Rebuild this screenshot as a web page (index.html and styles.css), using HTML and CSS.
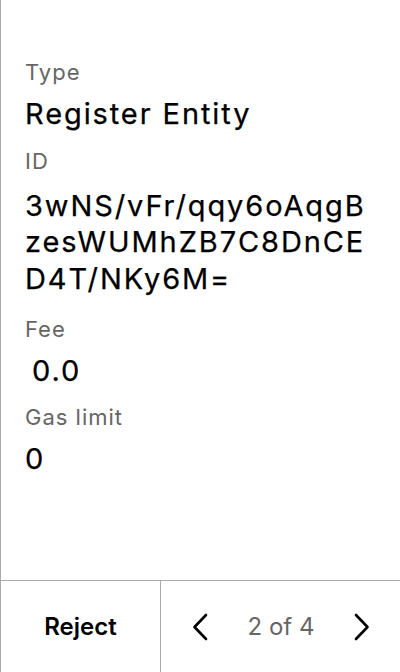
FILE: index.html
```html
<!DOCTYPE html>
<html>
<head>
<meta charset="utf-8">
<link rel="stylesheet" href="styles.css">
</head>
<body>
<div class="screen">
  <div class="content">
    <div class="label">Type</div>
    <div class="value">Register Entity</div>
    <div class="label">ID</div>
    <div class="value multi">3wNS/vFr/qqy6oAqgBzesWUMhZB7C8DnCED4T/NKy6M=</div>
    <div class="label">Fee</div>
    <div class="value pre"> 0.0</div>
    <div class="label">Gas limit</div>
    <div class="value">0</div>
  </div>
  <div class="bar">
    <div class="reject">Reject</div>
    <div class="pager">
      <svg class="chev" width="16" height="28" viewBox="0 0 16 28"><path d="M14 2 L2.5 14 L14 26" fill="none" stroke="#000" stroke-width="2.6" stroke-linecap="round" stroke-linejoin="round"/></svg>
      <span class="count">2 of 4</span>
      <svg class="chev" width="16" height="28" viewBox="0 0 16 28"><path d="M2 2 L13.5 14 L2 26" fill="none" stroke="#000" stroke-width="2.6" stroke-linecap="round" stroke-linejoin="round"/></svg>
    </div>
  </div>
</div>
</body>
</html>
```
FILE: styles.css
```css
html, body {
  margin: 0;
  padding: 0;
  background: #fff;
}
body {
  font-family: Inter, "Noto Sans", sans-serif;
  color: #000;
}
.screen {
  width: 400px;
  height: 672px;
  box-sizing: border-box;
  border-left: 1px solid #aaa;
  display: flex;
  flex-direction: column;
}
.content {
  flex: 1;
  padding: 58px 24px 0 24px;
  display: flex;
  flex-direction: column;
}
.label {
  font-size: 22px;
  line-height: 28px;
  letter-spacing: 1px;
  color: #666;
  margin-bottom: 13px;
}
.value {
  font-size: 29px;
  line-height: 30px;
  letter-spacing: 1.9px;
  color: #000;
  margin-bottom: 17.5px;
  -webkit-text-stroke: 0.25px #000;
}
.multi {
  line-height: 36.5px;
  word-break: break-all;
}
.pre {
  white-space: pre;
  word-spacing: -3px;
}
.bar {
  height: 92px;
  border-top: 1px solid #aaa;
  display: flex;
  box-sizing: border-box;
}
.reject {
  width: 159px;
  border-right: 1px solid #aaa;
  display: flex;
  align-items: center;
  justify-content: center;
  font-size: 24px;
  font-weight: 600;
}
.pager {
  flex: 1;
  display: flex;
  align-items: center;
  justify-content: space-between;
  padding: 0 30px 0 31px;
}
.count {
  font-size: 24px;
  color: #666;
}
.chev {
  display: block;
}
```
